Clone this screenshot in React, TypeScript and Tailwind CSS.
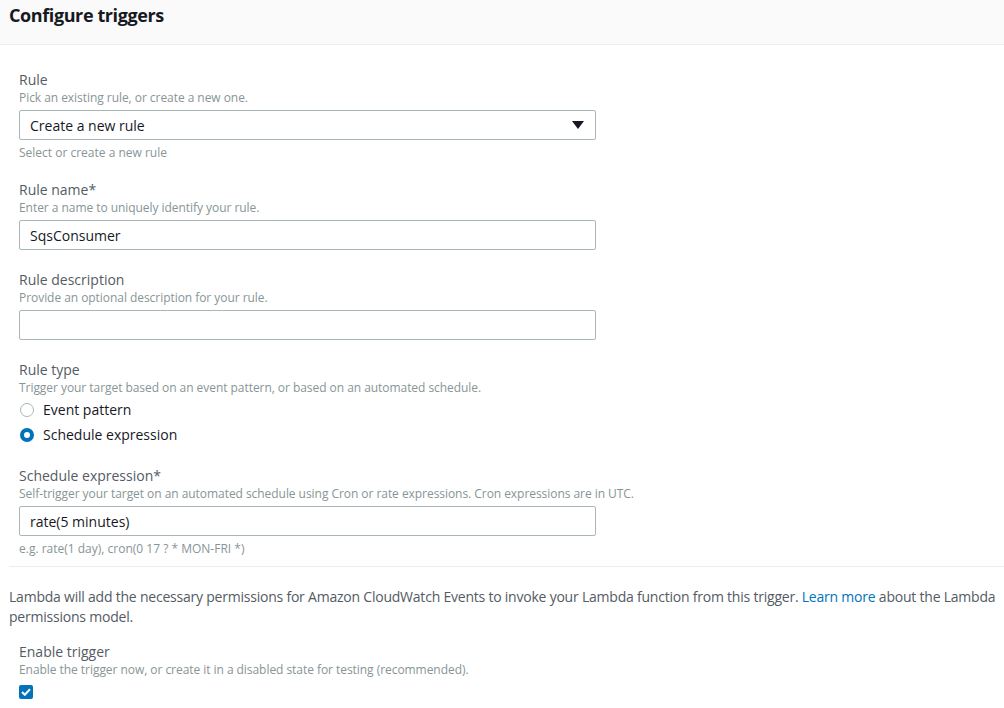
import React from "react";

const font = { fontFamily: '"Open Sans", "Noto Sans", sans-serif' };

interface FieldProps {
  label: string;
  description: string;
  children: React.ReactNode;
}

const Field: React.FC<FieldProps> = ({ label, description, children }) => {
  return (
    <div>
      <div className="text-[14px] leading-[18px] text-[#545b64]">{label}</div>
      <div className="mt-[1px] text-[12px] leading-[16px] tracking-[-0.05px] text-[#879596]">{description}</div>
      <div className="mt-[4px]">{children}</div>
    </div>
  );
};

const TextBox: React.FC<{ value?: string }> = ({ value }) => (
  <div className="flex h-[30px] w-[577px] items-center rounded-[2px] border border-[#aab7b8] px-[10px] text-[14px] text-[#16191f]">
    {value}
  </div>
);

const Radio: React.FC<{ label: string; checked?: boolean }> = ({ label, checked }) => (
  <div className="flex h-[25px] items-center">
    {checked ? (
      <span className="ml-[1px] h-[14px] w-[14px] rounded-full border-[4px] border-[#0073bb] bg-white" />
    ) : (
      <span className="ml-[1px] h-[14px] w-[14px] rounded-full border border-[#aab7b8] bg-white" />
    )}
    <span className="ml-[9px] text-[14px] text-[#16191f]">{label}</span>
  </div>
);

export default function App() {
  return (
    <div className="min-h-screen bg-white" style={font}>
      <div className="h-[45px] border-b border-[#eaeded] bg-[#fafafa] pl-[9px] pt-[3px]">
        <h1 className="text-[18px] font-bold leading-[24px] tracking-[-0.4px] text-[#16191f]">Configure triggers</h1>
      </div>

      <div className="px-[19px] pt-[26px]">
        <Field label="Rule" description="Pick an existing rule, or create a new one.">
          <div className="flex h-[30px] w-[577px] items-center justify-between rounded-[2px] border border-[#aab7b8] pl-[10px] pr-[11px] text-[14px] text-[#16191f]">
            <span>Create a new rule</span>
            <svg width="12" height="8" viewBox="0 0 12 8">
              <path d="M0 0h12L6 8z" fill="#16191f" />
            </svg>
          </div>
          <div className="mt-[5px] text-[12px] leading-[16px] text-[#879596]">Select or create a new rule</div>
        </Field>

        <div className="mt-[20px]">
          <Field label="Rule name*" description="Enter a name to uniquely identify your rule.">
            <TextBox value="SqsConsumer" />
          </Field>
        </div>

        <div className="mt-[21px]">
          <Field label="Rule description" description="Provide an optional description for your rule.">
            <TextBox />
          </Field>
        </div>

        <div className="mt-[21px]">
          <div className="text-[14px] leading-[18px] text-[#545b64]">Rule type</div>
          <div className="mt-[1px] text-[12px] leading-[16px] tracking-[-0.05px] text-[#879596]">
            Trigger your target based on an event pattern, or based on an automated schedule.
          </div>
          <div className="mt-[1px]">
            <Radio label="Event pattern" />
            <Radio label="Schedule expression" checked />
          </div>
        </div>

        <div className="mt-[20px]">
          <Field
            label="Schedule expression*"
            description="Self-trigger your target on an automated schedule using Cron or rate expressions. Cron expressions are in UTC."
          >
            <TextBox value="rate(5 minutes)" />
          </Field>
          <div className="mt-[5px] text-[12px] leading-[16px] text-[#879596]">
            e.g. rate(1 day), cron(0 17 ? * MON-FRI *)
          </div>
        </div>
      </div>

      <div className="ml-[9px] mt-[9px] border-t border-[#eaeded]" />

      <p className="pl-[9px] pr-[2px] pt-[20px] text-[14px] leading-[20px] tracking-[-0.22px] text-[#545b64]">
        Lambda will add the necessary permissions for Amazon CloudWatch Events to invoke your Lambda function from this
        trigger. <span className="text-[#0073bb]">Learn more</span> about the Lambda permissions model.
      </p>

      <div className="px-[19px] pt-[16px]">
        <div className="text-[14px] leading-[18px] text-[#545b64]">Enable trigger</div>
        <div className="mt-[1px] text-[12px] leading-[16px] tracking-[-0.05px] text-[#879596]">
          Enable the trigger now, or create it in a disabled state for testing (recommended).
        </div>
        <div className="mt-[7px] flex h-[14px] w-[14px] items-center justify-center rounded-[2px] bg-[#0073bb]">
          <svg width="10" height="8" viewBox="0 0 10 8">
            <path d="M1 4l2.8 2.8L9 1.2" fill="none" stroke="white" strokeWidth="2" />
          </svg>
        </div>
      </div>
    </div>
  );
}
